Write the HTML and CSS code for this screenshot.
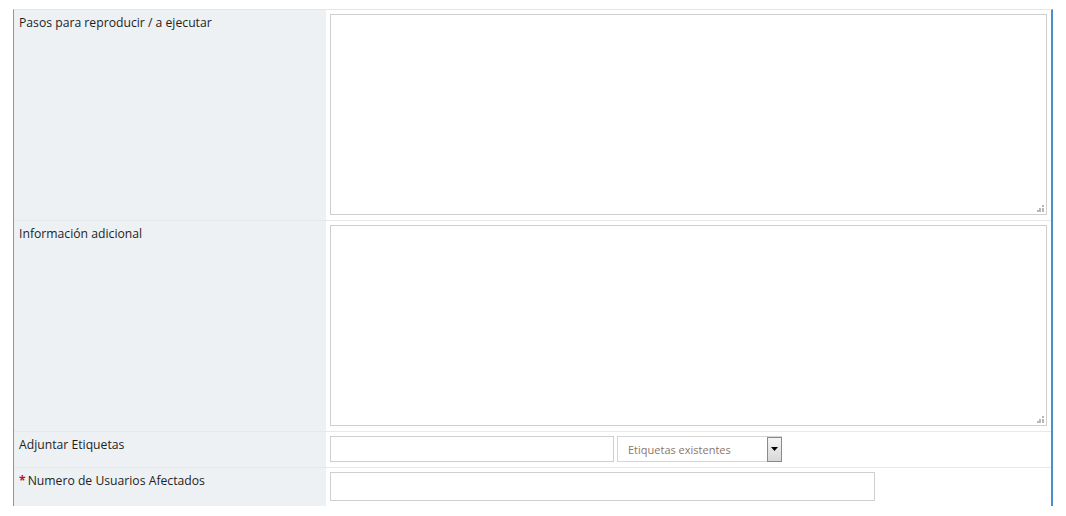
FILE: index.html
```html
<!DOCTYPE html>
<html lang="es">
  <head>
    <meta charset="UTF-8" />
    <title>Reportar incidencia</title>
    <link rel="stylesheet" href="styles.css">
  </head>
  <body>
    <div class="form-table">
      <div class="form-row">
        <div class="form-label">Pasos para reproducir / a ejecutar</div>
        <div class="form-field">
          <div class="area-wrap">
            <textarea class="big-area"></textarea>
            <span class="grip"></span>
          </div>
        </div>
      </div>

      <div class="form-row">
        <div class="form-label">Información adicional</div>
        <div class="form-field">
          <div class="area-wrap">
            <textarea class="big-area"></textarea>
            <span class="grip"></span>
          </div>
        </div>
      </div>

      <div class="form-row">
        <div class="form-label">Adjuntar Etiquetas</div>
        <div class="form-field tags-field">
          <input class="text-input tag-input" type="text" />
          <div class="fake-select">
            <span class="select-text">Etiquetas existentes</span>
            <span class="select-btn">
              <svg width="7" height="4" viewBox="0 0 7 4"><path d="M0 0h7L3.5 4z" fill="#000"/></svg>
            </span>
          </div>
        </div>
      </div>

      <div class="form-row last-row">
        <div class="form-label"><span class="required">*</span>Numero de Usuarios Afectados</div>
        <div class="form-field">
          <input class="text-input users-input" type="text" />
        </div>
      </div>
    </div>
  </body>
</html>
```

FILE: styles.css
```css
body {
  margin: 0;
  padding: 9px 0 0 13px;
  background-color: white;
  font-family: "Open Sans", Arial, sans-serif;
  font-size: 12.2px;
  color: #1e1e1e;
}

.form-table {
  width: 1037px;
  border-left: 1px solid #6b9fd1;
  border-right: 2px solid #4a8fcb;
  border-top: 1px solid #e6e6e6;
}

.form-row {
  display: grid;
  grid-template-columns: 312px 725px;
  border-bottom: 1px solid #e8e8e8;
}

.last-row {
  border-bottom: none;
}

.form-label {
  background-color: #edf1f4;
  padding: 5px 5px;
  line-height: 16px;
}

.required {
  color: #c8102e;
  font-weight: bold;
  margin-right: 2px;
}

.form-field {
  padding: 4px 4px 5px 4px;
}

.area-wrap {
  position: relative;
  height: 201px;
}

.big-area {
  box-sizing: border-box;
  display: block;
  width: 717px;
  height: 201px;
  margin: 0;
  border: 1px solid #cfcfcf;
  resize: none;
  outline: none;
}

.grip {
  position: absolute;
  right: 3px;
  bottom: 3px;
  width: 7px;
  height: 7px;
  background:
    radial-gradient(circle, #b8b8b8 0.8px, transparent 1px) 5px 0 / 2px 2px no-repeat,
    radial-gradient(circle, #b8b8b8 0.8px, transparent 1px) 2px 3px / 2px 2px no-repeat,
    radial-gradient(circle, #b8b8b8 0.8px, transparent 1px) 5px 3px / 2px 2px no-repeat,
    radial-gradient(circle, #b8b8b8 0.8px, transparent 1px) 0 5px / 2px 2px no-repeat,
    radial-gradient(circle, #b8b8b8 0.8px, transparent 1px) 2px 5px / 2px 2px no-repeat,
    radial-gradient(circle, #b8b8b8 0.8px, transparent 1px) 5px 5px / 2px 2px no-repeat;
}

.text-input {
  box-sizing: border-box;
  display: block;
  margin: 0;
  border: 1px solid #cfcfcf;
  outline: none;
  font-family: "Open Sans", Arial, sans-serif;
}

.tags-field {
  display: flex;
  gap: 3px;
}

.tag-input {
  width: 284px;
  height: 26px;
}

.fake-select {
  box-sizing: border-box;
  display: flex;
  align-items: center;
  justify-content: space-between;
  width: 165px;
  height: 26px;
  border: 1px solid #d6d6d6;
}

.select-text {
  padding-left: 10px;
  font-size: 11px;
  color: #8a776c;
}

.select-btn {
  box-sizing: border-box;
  display: flex;
  align-items: center;
  justify-content: center;
  width: 15px;
  height: 25px;
  margin-right: -1px;
  border: 1px solid #8a8a8a;
  background: linear-gradient(#f4f4f4, #d8d8d8);
}

.users-input {
  width: 545px;
  height: 29px;
}
```
